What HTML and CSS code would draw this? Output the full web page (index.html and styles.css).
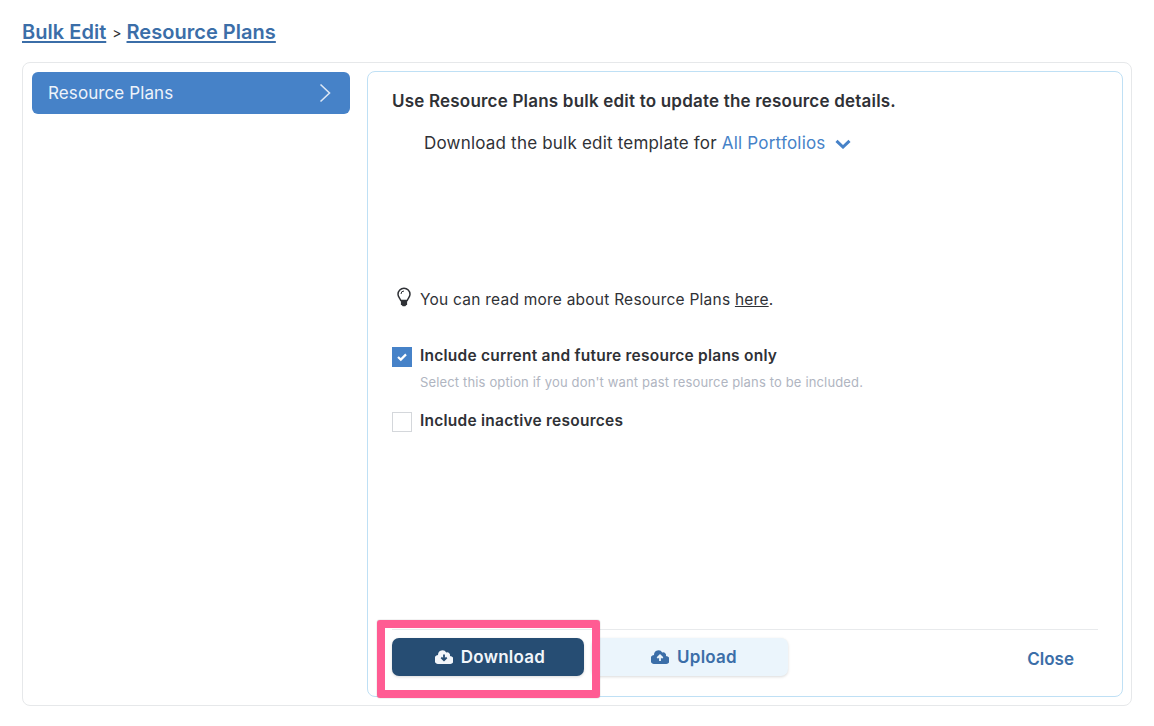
FILE: index.html
```html
<!DOCTYPE html>
<html lang="en">
<head>
<meta charset="utf-8">
<title>Bulk Edit</title>
<link rel="stylesheet" href="styles.css">
</head>
<body>
<nav class="crumbs"><a href="#">Bulk Edit</a><span class="sep">&gt;</span><a href="#">Resource Plans</a></nav>
<div class="shell">
  <aside class="side">
    <div class="side-item"><span>Resource Plans</span>
      <svg class="side-chev" width="12" height="20" viewBox="0 0 12 20"><path d="M1.5 1.5 10.5 10 1.5 18.5" fill="none" stroke="#dbe6f4" stroke-width="1.6"/></svg>
    </div>
  </aside>
  <main class="panel">
    <h1 class="title">Use Resource Plans bulk edit to update the resource details.</h1>
    <p class="template">Download the bulk edit template for <a href="#" class="scope">All Portfolios</a>
      <svg class="scope-chev" width="16" height="10" viewBox="0 0 16 10"><path d="M1.500 1.800 8 8 14.500 1.800" fill="none" stroke="#4682c8" stroke-width="3"/></svg>
    </p>
    <p class="tip">
      <svg class="bulb" width="16" height="20" viewBox="0 0 16 20"><path d="M8 1.2a6 6 0 0 0-6 6c0 2.6 1.900 3.900 2.800 6.300h6.400c.9-2.400 2.800-3.700 2.800-6.300a6 6 0 0 0-6-6Z" fill="none" stroke="#2f3136" stroke-width="1.500"/><path d="M4.900 14h6.200v3.200l-1.800 2h-2.600l-1.800-2Z" fill="#2f3136"/><path d="M5 7a3 3 0 0 1 3-3" fill="none" stroke="#2f3136" stroke-width="1"/></svg>
      <span>You can read more about Resource Plans <a href="#" class="here">here</a>.</span>
    </p>
    <div class="opt opt-first">
      <span class="box box-on"><svg width="12" height="10" viewBox="0 0 12 10"><path d="M2 5 4.800 7.600 10 2.400" fill="none" stroke="#fff" stroke-width="2.200"/></svg></span>
      <label>Include current and future resource plans only</label>
    </div>
    <p class="hint">Select this option if you don't want past resource plans to be included.</p>
    <div class="opt">
      <span class="box"></span>
      <label>Include inactive resources</label>
    </div>
    <footer class="foot">
      <div class="foot-actions">
        <button class="btn btn-dark"><svg width="18" height="14" viewBox="0 0 18 14"><path d="M14.900 6.100A2.800 2.800 0 0 0 11.300 2.500 4.500 4.500 0 0 0 3 4.800v.3A3 3 0 0 0 4 14h10.300a3.900 3.900 0 0 0 .6-7.900Z" fill="#f2f6fa"/><path d="M9 4.500v5M6.300 7.500 9 10.200 11.700 7.500" fill="none" stroke="#264d73" stroke-width="1.800"/></svg>Download</button>
        <button class="btn btn-light"><svg width="18" height="14" viewBox="0 0 18 14"><path d="M14.900 6.100A2.800 2.800 0 0 0 11.300 2.500 4.500 4.500 0 0 0 3 4.800v.3A3 3 0 0 0 4 14h10.300a3.900 3.900 0 0 0 .6-7.900Z" fill="#3b6ea8"/><path d="M9 11V5.500M6.300 8 9 5.300 11.700 8" fill="none" stroke="#ebf5fc" stroke-width="1.800"/></svg>Upload</button>
        <a href="#" class="close">Close</a>
      </div>
    </footer>
    <div class="highlight"></div>
  </main>
</div>
</body>
</html>
```

FILE: styles.css
```css
* { box-sizing: border-box; }
html, body { margin: 0; height: 100%; }
body {
  padding: 20px 22px 20px;
  font-family: Inter, "Liberation Sans", sans-serif;
  color: #2f3136;
  background: #fff;
}
.crumbs {
  height: 24px;
  line-height: 24px;
  font-size: 20px;
  font-weight: 600;
  margin-bottom: 18px;
  display: flex;
  align-items: center;
}
.crumbs a { color: #3b6ea8; text-decoration: underline; text-decoration-thickness: 2px; text-underline-offset: 2px; letter-spacing: 0.03px; }
.sep { font-size: 14px; font-weight: 400; margin: 2px 5px 0 6px; }
.shell {
  width: 1110px;
  height: 644px;
  border: 1px solid #e6e8ea;
  border-radius: 8px;
  padding: 8px 8px 8px 9px;
  display: flex;
  gap: 17px;
}
.side { width: 318px; flex: none; padding-top: 1px; }
.side-item {
  height: 42px;
  background: #4682c8;
  border-radius: 6px;
  color: #eef3fa;
  font-size: 17px;
  padding: 0 19px 0 16px;
  display: flex;
  align-items: center;
  justify-content: space-between;
  letter-spacing: 0.1px;
}
.panel {
  position: relative;
  flex: 1;
  border: 1px solid #bfe0f5;
  border-radius: 8px;
  padding: 19px 24px 0;
  display: flex;
  flex-direction: column;
}
.title { margin: 0; font-size: 17px; line-height: 20px; font-weight: 600; letter-spacing: 0.2px; }
.template { margin: 22px 0 0 32px; font-size: 17px; line-height: 20px; letter-spacing: 0.2px; display: block; }
.scope { color: #4682c8; text-decoration: none; }
.scope-chev { margin-left: 4px; vertical-align: 0; }
.tip { margin: 137px 0 0 4px; font-size: 15.500px; line-height: 20px; letter-spacing: 0.23px; display: flex; gap: 8px; align-items: flex-start; }
.bulb { margin-top: -3px; flex: none; }
.here { color: #2f3136; text-decoration: underline; }
.opt { display: flex; align-items: flex-start; gap: 8px; height: 20px; font-size: 15.500px; font-weight: 600; line-height: 20px; letter-spacing: 0.24px; }
.opt label { margin-top: -1px; }
.opt-first { margin-top: 37px; }
.box { width: 20px; height: 20px; border: 1px solid #d4d7db; display: flex; align-items: center; justify-content: center; flex: none; }
.box-on { background: #4682c8; border-color: #4682c8; }
.hint { margin: 6px 0 21px 28px; font-size: 13px; line-height: 18px; color: #b0b5c1; letter-spacing: 0.15px; }
.foot { margin-top: auto; height: 67px; border-top: 1px solid #e8eaec; }
.foot-actions { display: flex; align-items: flex-start; padding-top: 8px; }
.btn {
  height: 38px;
  border: 0;
  border-radius: 7px;
  font: 600 17px/38px Inter, "Liberation Sans", sans-serif;
  letter-spacing: 0.25px;
  display: flex;
  align-items: center;
  justify-content: center;
  gap: 8px;
  box-shadow: 0 1px 3px rgba(0,0,0,.15);
}
.btn-dark { width: 192px; background: #264d73; color: #f2f6fa; padding: 0 0 0 4px; }
.btn-light { width: 196px; margin-left: 8px; background: #ebf5fc; color: #3b6ea8; padding: 0 0 0 8px; }
.close { margin-left: auto; margin-right: 24px; margin-top: 11px; font-size: 17px; line-height: 20px; font-weight: 600; color: #3b6ea8; text-decoration: none; }
.highlight {
  position: absolute;
  left: 9px;
  bottom: -2px;
  width: 223px;
  height: 78px;
  border: 8px solid #ff5c93;
  border-radius: 3px;
  box-shadow: 0 0 1px rgba(0,0,0,.5);
}
```
